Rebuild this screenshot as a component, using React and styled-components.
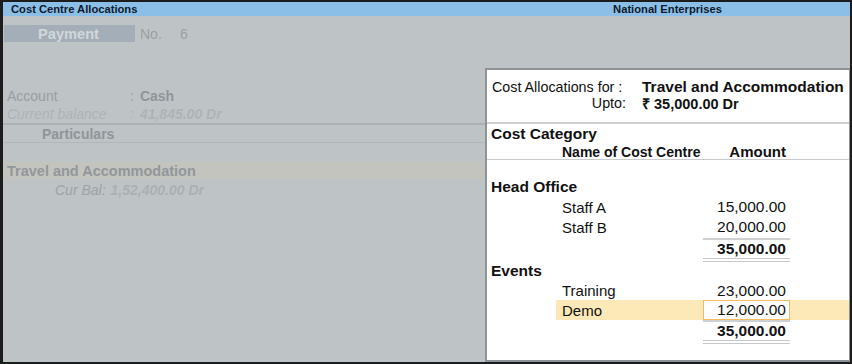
import React from 'react';
import styled, { createGlobalStyle } from 'styled-components';

const GlobalStyle = createGlobalStyle`
    html, body {
        margin: 0;
        padding: 0;
        background: #1c1c1c;
    }
    body {
        font-family: 'Liberation Sans', Arial, sans-serif;
    }
`;

const Frame = styled.div`
    width: 852px;
    height: 364px;
    box-sizing: border-box;
    padding: 2px 2px 2px 3px;
    background: #1c1c1c;
    display: flex;
    flex-direction: column;
`;

const TitleBar = styled.div`
    height: 14px;
    background: #8cbfe7;
    display: flex;
    align-items: center;
    font-size: 11.2px;
    font-weight: bold;
    color: #0e1a2b;
`;

const TitleLeft = styled.div`
    flex: 1;
    padding-left: 8px;
`;

const TitleRight = styled.div`
    width: 365px;
    text-align: center;
`;

const Body = styled.div`
    flex: 1;
    display: flex;
    background: #bec4c6;
    min-height: 0;
`;

const LeftPanel = styled.div`
    flex: 1;
    display: flex;
    flex-direction: column;
    font-size: 14px;
    color: #9a9fa3;
`;

const VoucherRow = styled.div`
    margin-top: 9px;
    height: 17px;
    display: flex;
    align-items: center;
`;

const VoucherType = styled.div`
    width: 131px;
    height: 17px;
    margin-left: 1px;
    background: #a3aeb8;
    color: #d2d7db;
    font-size: 14.6px;
    font-weight: bold;
    display: flex;
    align-items: center;
    justify-content: center;
    padding-right: 2px;
    box-sizing: border-box;
`;

const VoucherNo = styled.span`
    margin-left: 5px;
    width: 40px;
`;

const InfoBlock = styled.div`
    margin-top: 45px;
    padding-left: 4px;
`;

const InfoRow = styled.div`
    height: 18px;
    display: flex;
    align-items: center;
    font-style: ${({ faint }) => (faint ? 'italic' : 'normal')};
    color: ${({ faint }) => (faint ? '#adb3b6' : '#989ea2')};
`;

const InfoLabel = styled.span`
    width: 123px;
`;

const InfoValue = styled.span`
    font-weight: bold;
    margin-left: 6px;
    color: ${({ faint }) => (faint ? '#aeb3b6' : '#8f959a')};
`;

const ColumnHead = styled.div`
    height: 20px;
    box-sizing: border-box;
    border-top: 2px solid #abb1b4;
    border-bottom: 1px solid #b0b6b9;
    display: flex;
    align-items: center;
    padding-left: 39px;
    font-weight: bold;
    color: #8f959a;
`;

const LedgerRow = styled.div`
    margin-top: 19px;
    height: 17px;
    display: flex;
    align-items: center;
    padding-left: 4px;
    background: #c3c4be;
    font-size: 14.5px;
    font-weight: bold;
    color: #92979b;
`;

const BalanceRow = styled.div`
    height: 21px;
    display: flex;
    align-items: center;
    padding-left: 52px;
    font-style: italic;
    color: #9ca2a6;
    span {
        margin-left: 5px;
        font-weight: bold;
        color: #abb0b3;
    }
`;

const Dialog = styled.div`
    width: 365px;
    margin-top: 52px;
    background: #ffffff;
    border: 2px solid #8f9396;
    border-right-width: 1px;
    box-sizing: border-box;
    font-size: 15px;
    color: #111111;
    display: flex;
    flex-direction: column;
`;

const DialogHead = styled.div`
    padding-top: 9px;
    height: 54px;
    box-sizing: border-box;
    display: grid;
    grid-template-columns: 139px auto;
    column-gap: 16px;
    grid-auto-rows: 16px;
    align-items: center;
    border-bottom: 2px solid #cfd0d1;
`;

const HeadLabel = styled.div`
    font-size: 14.3px;
    text-align: ${({ align }) => align || 'right'};
    padding-left: 5px;
    white-space: nowrap;
`;

const HeadValue = styled.div`
    font-size: ${({ size }) => size || 15}px;
    font-weight: bold;
    white-space: nowrap;
`;

const TableHead = styled.div`
    border-bottom: 1px solid #c9cacb;
    font-weight: bold;
`;

const CategoryRow = styled.div`
    height: ${({ h }) => h || 20}px;
    display: flex;
    align-items: center;
    padding-left: 4px;
    font-size: 15.5px;
    font-weight: bold;
    margin-top: ${({ gap }) => gap || 0}px;
`;

const CentreRow = styled.div`
    height: ${({ h }) => h || 20}px;
    margin-top: ${({ gap }) => gap || 0}px;
    display: grid;
    grid-template-columns: 69px 147px 87px 1fr;
    align-items: stretch;
    font-weight: ${({ bold }) => (bold ? 'bold' : 'normal')};
`;

const CentreName = styled.div`
    display: flex;
    align-items: center;
    padding-left: 6px;
    white-space: nowrap;
    font-size: ${({ size }) => size || 15}px;
    background: ${({ active }) => (active ? '#fde9b7' : 'transparent')};
`;

const AmountCell = styled.div`
    display: flex;
    align-items: center;
    justify-content: flex-end;
    box-sizing: border-box;
    font-size: ${({ size }) => size || 15.5}px;
    background: ${({ active }) => (active ? '#ffffff' : 'transparent')};
    border: ${({ active }) => (active ? '1px solid #f2bc5c' : 'none')};
    padding-right: ${({ active }) => (active ? '3px' : '4px')};
`;

const Filler = styled.div`
    background: ${({ active }) => (active ? '#fde9b7' : 'transparent')};
`;

const TotalCell = styled.div`
    display: flex;
    align-items: center;
    justify-content: flex-end;
    padding-right: 4px;
    font-size: 15.5px;
    border-top: 2px solid #cfd0d1;
    border-bottom: 4px double #c6c7c8;
    font-weight: bold;
`;

const groups = [
    {
        name: 'Head Office',
        gap: 17,
        rows: [
            { name: 'Staff A', amount: '15,000.00' },
            { name: 'Staff B', amount: '20,000.00' },
        ],
        total: '35,000.00',
        totalGap: 1,
    },
    {
        name: 'Events',
        gap: 0,
        rows: [
            { name: 'Training', amount: '23,000.00', h: 19 },
            { name: 'Demo', amount: '12,000.00', active: true, h: 17 },
        ],
        total: '35,000.00',
        totalGap: 3,
    },
];

const App = () => {
    return (
        <>
            <GlobalStyle />
            <Frame>
                <TitleBar>
                    <TitleLeft>Cost Centre Allocations</TitleLeft>
                    <TitleRight>National Enterprises</TitleRight>
                </TitleBar>
                <Body>
                    <LeftPanel>
                        <VoucherRow>
                            <VoucherType>Payment</VoucherType>
                            <VoucherNo>No.</VoucherNo>
                            <span>6</span>
                        </VoucherRow>
                        <InfoBlock>
                            <InfoRow>
                                <InfoLabel>Account</InfoLabel>:
                                <InfoValue>Cash</InfoValue>
                            </InfoRow>
                            <InfoRow faint>
                                <InfoLabel>Current balance</InfoLabel>:
                                <InfoValue faint>41,845.00 Dr</InfoValue>
                            </InfoRow>
                        </InfoBlock>
                        <ColumnHead>Particulars</ColumnHead>
                        <LedgerRow>Travel and Accommodation</LedgerRow>
                        <BalanceRow>
                            Cur Bal: <span>1,52,400.00 Dr</span>
                        </BalanceRow>
                    </LeftPanel>
                    <Dialog>
                        <DialogHead>
                            <HeadLabel align="left">Cost Allocations for :</HeadLabel>
                            <HeadValue size={15.5}>Travel and Accommodation</HeadValue>
                            <HeadLabel>Upto:</HeadLabel>
                            <HeadValue size={14.5}>₹ 35,000.00 Dr</HeadValue>
                        </DialogHead>
                        <TableHead>
                            <CategoryRow h={19}>Cost Category</CategoryRow>
                            <CentreRow bold h={16}>
                                <div />
                                <CentreName size={14}>Name of Cost Centre</CentreName>
                                <AmountCell size={15}>Amount</AmountCell>
                                <Filler />
                            </CentreRow>
                        </TableHead>
                        {groups.map((g) => (
                            <React.Fragment key={g.name}>
                                <CategoryRow gap={g.gap}>{g.name}</CategoryRow>
                                {g.rows.map((r) => (
                                    <CentreRow key={r.name} h={r.h}>
                                        <div />
                                        <CentreName active={r.active}>
                                            {r.name}
                                        </CentreName>
                                        <AmountCell active={r.active}>
                                            {r.amount}
                                        </AmountCell>
                                        <Filler active={r.active} />
                                    </CentreRow>
                                ))}
                                <CentreRow h={23} gap={g.totalGap}>
                                    <div />
                                    <div />
                                    <TotalCell>{g.total}</TotalCell>
                                    <div />
                                </CentreRow>
                            </React.Fragment>
                        ))}
                    </Dialog>
                </Body>
            </Frame>
        </>
    );
};

export default App;
